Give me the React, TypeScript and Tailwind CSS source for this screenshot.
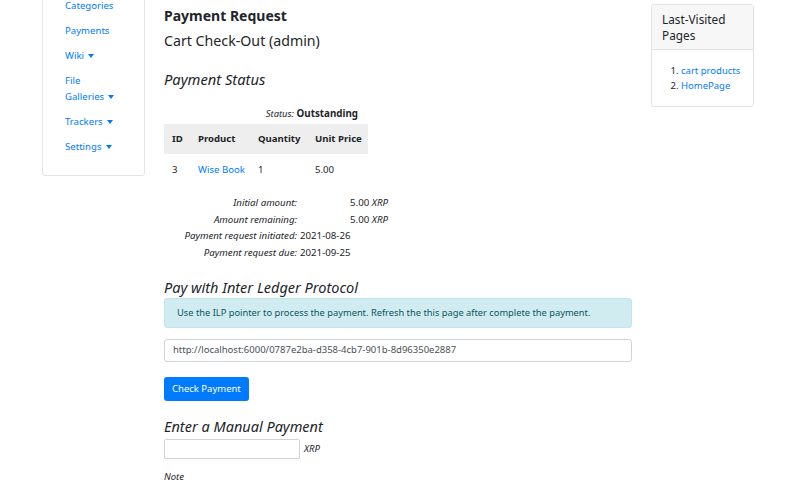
const font = { fontFamily: '"Noto Sans", "Open Sans", sans-serif' };

function Caret() {
    return (
        <span className="inline-block w-0 h-0 ml-[4px] align-middle border-l-[3px] border-r-[3px] border-t-[4px] border-l-transparent border-r-transparent border-t-[#007bff]"></span>
    );
}

const navItems = [
    { label: "Categories" },
    { label: "Payments" },
    { label: "Wiki", caret: true },
    { label: "File Galleries", caret: true, wrap: true },
    { label: "Trackers", caret: true },
    { label: "Settings", caret: true },
];

const details = [
    { label: "Initial amount:", value: "5.00", unit: "XRP" },
    { label: "Amount remaining:", value: "5.00", unit: "XRP" },
    { label: "Payment request initiated:", value: "2021-08-26" },
    { label: "Payment request due:", value: "2021-09-25" },
];

export default function App() {
    return (
        <div className="w-[800px] h-[480px] overflow-hidden bg-white text-[#212529]" style={font}>
            <div className="flex items-start pl-[42px]">
                {/* left nav */}
                <div className="w-[103px] mt-[-25px] border border-[#e3e3e3] rounded-b-[3px] bg-white pl-[22px] pt-[17px] pb-[16px]">
                    {navItems.map((item) => (
                        <div key={item.label} className="text-[9.6px] leading-[16px] text-[#007bff] py-[4.5px]">
                            {item.wrap ? (
                                <>
                                    File
                                    <br />
                                    Galleries
                                </>
                            ) : (
                                item.label
                            )}
                            {item.caret && <Caret />}
                        </div>
                    ))}
                </div>

                {/* main */}
                <div className="w-[468px] ml-[19px] pt-[6px]">
                    <h2 className="text-[14px] leading-[20px] font-bold">Payment Request</h2>
                    <div className="text-[14.2px] leading-[20px] mt-[5px]">Cart Check-Out (admin)</div>
                    <h3 className="text-[14.7px] leading-[20px] italic mt-[18px]">Payment Status</h3>

                    <div className="w-[204px] mt-[18px] text-right text-[9.8px] leading-[14px] pr-[10px]">
                        <span className="italic text-[9.4px]">Status:</span> <span className="font-bold">Outstanding</span>
                    </div>
                    <table className="w-[204px] text-[9.6px] mt-[3px] border-collapse">
                        <thead>
                            <tr className="bg-[#eeeeee] h-[30px] font-bold text-left">
                                <th className="pl-[8px] w-[26px]">ID</th>
                                <th className="pl-[8px] w-[60px]">Product</th>
                                <th className="pl-[8px] w-[57px]">Quantity</th>
                                <th className="pl-[8px]">Unit Price</th>
                            </tr>
                        </thead>
                        <tbody>
                            <tr className="h-[32px]">
                                <td className="pl-[8px]">3</td>
                                <td className="pl-[8px] text-[#007bff]">Wise Book</td>
                                <td className="pl-[8px]">1</td>
                                <td className="pl-[8px]">5.00</td>
                            </tr>
                        </tbody>
                    </table>

                    <div className="mt-[9px] grid grid-cols-[133px_88px] gap-x-[3px] text-[9.7px] leading-[16.5px]">
                        {details.map((d) => (
                            <div key={d.label} className="contents">
                                <div className="text-right italic">{d.label}</div>
                                <div className={d.unit ? "text-right" : ""}>
                                    {d.value} {d.unit && <span className="italic">{d.unit}</span>}
                                </div>
                            </div>
                        ))}
                    </div>

                    <h3 className="text-[14.5px] leading-[20px] italic mt-[16px]">Pay with Inter Ledger Protocol</h3>
                    <div className="mt-[1px] h-[30px] flex items-center px-[12px] bg-[#d1ecf1] border border-[#bee5eb] rounded-[3px] text-[9.3px] text-[#0c5460] whitespace-nowrap">
                        Use the ILP pointer to process the payment. Refresh the this page after complete the payment.
                    </div>
                    <div className="mt-[11px] h-[23px] flex items-center px-[8px] border border-[#ced4da] rounded-[3px] text-[9.5px] text-[#495057]">
                        http://localhost:6000/0787e2ba-d358-4cb7-901b-8d96350e2887
                    </div>
                    <button className="mt-[15px] h-[24px] px-[8px] bg-[#007bff] text-white text-[9.5px] rounded-[3px]">
                        Check Payment
                    </button>

                    <h3 className="text-[14.5px] leading-[20px] italic mt-[15px]">Enter a Manual Payment</h3>
                    <div className="mt-[3px] flex items-center">
                        <div className="w-[136px] h-[20px] border border-[#ced4da] rounded-[2px]"></div>
                        <span className="ml-[4px] text-[9.5px] italic">XRP</span>
                    </div>
                    <div className="mt-[11px] text-[9.5px] leading-[14px] italic">Note</div>
                </div>

                {/* right */}
                <div className="w-[103px] ml-[19px] mt-[4px] border border-[#e3e3e3] rounded-[3px]">
                    <div className="bg-[#f7f7f7] border-b border-[#e3e3e3] px-[10px] pt-[7px] pb-[6px] text-[11.8px] leading-[15.5px]">
                        Last-Visited Pages
                    </div>
                    <ol className="list-decimal pl-[29px] pt-[13px] pb-[13px] text-[9.5px] leading-[15px]">
                        <li className="text-[#007bff] marker:text-[#212529]">cart products</li>
                        <li className="text-[#007bff] marker:text-[#212529]">HomePage</li>
                    </ol>
                </div>
            </div>
        </div>
    );
}
